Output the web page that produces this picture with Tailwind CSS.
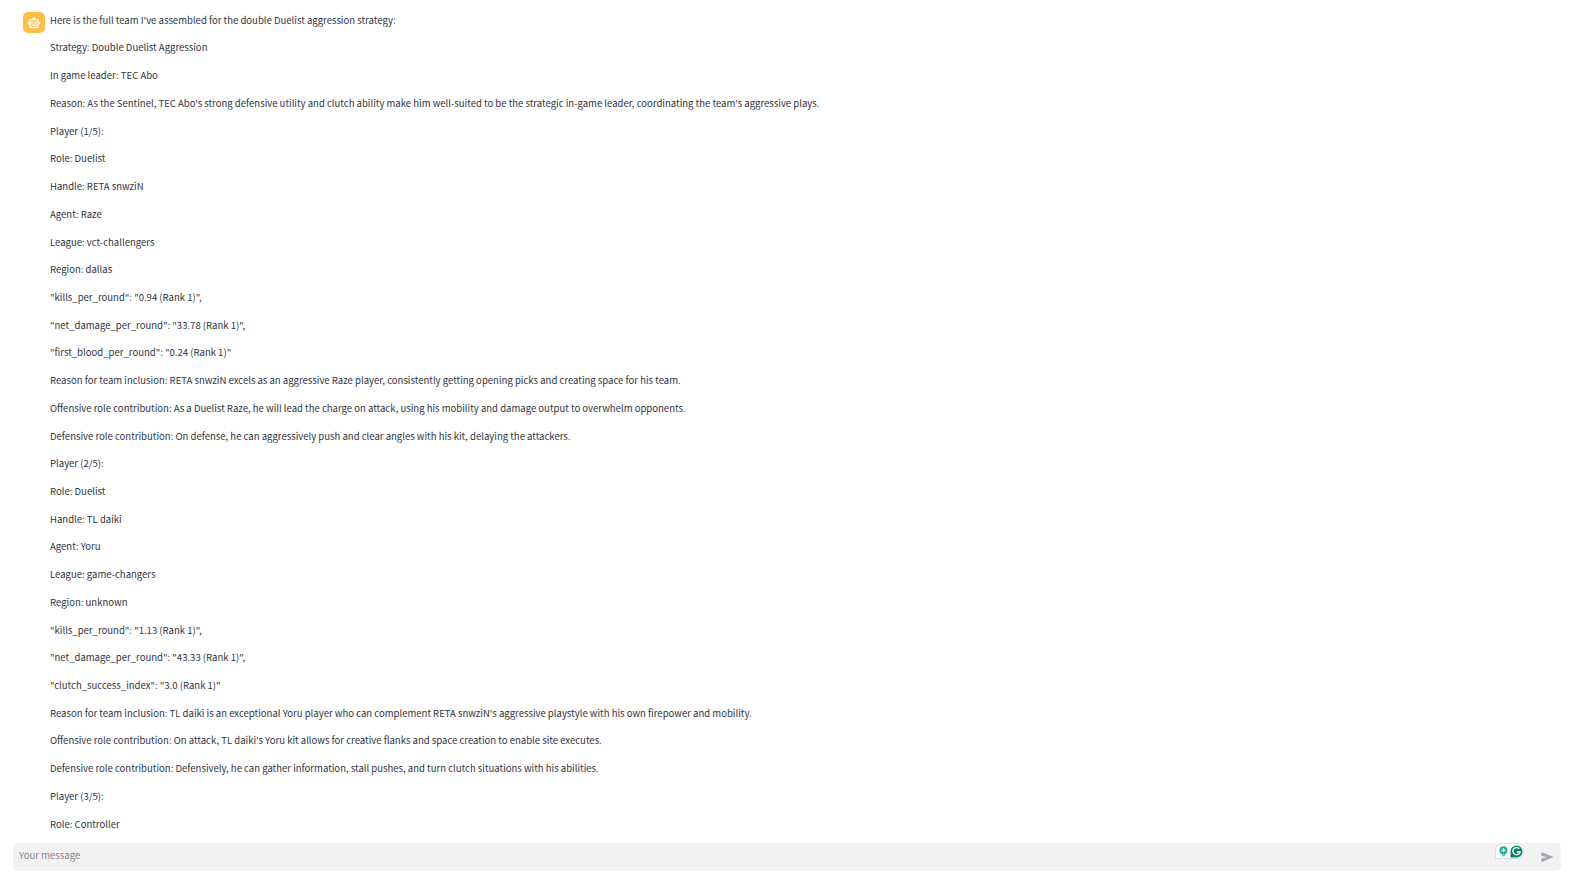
<!DOCTYPE html>
<html lang="en">
<head>
  <meta charset="UTF-8" />
  <meta name="viewport" content="width=device-width, initial-scale=1.0" />
  <title>Team Builder Chat</title>
  <script src="https://cdn.jsdelivr.net/npm/@tailwindcss/browser@4"></script>
</head>
<body class="bg-white h-screen overflow-hidden flex flex-col font-['Noto_Sans_CJK_SC',sans-serif] text-[9.558px] leading-[17.0667px] text-[#31333f]">

  <main class="flex-1 min-h-0 overflow-hidden flex items-start gap-[5px] pt-3 pl-[23px]">
    <!-- assistant avatar -->
    <div class="w-[22px] h-[21px] shrink-0 rounded-[5px] bg-[#ffbd45] flex items-center justify-center">
      <svg class="w-[14px] h-[14px]" viewBox="0 0 24 24" fill="white">
        <path d="M6 7h12v12H6z" fill-opacity=".3" />
        <path d="M20 9V7c0-1.1-.9-2-2-2h-3c0-1.66-1.34-3-3-3S9 3.34 9 5H6c-1.1 0-2 .9-2 2v2c-1.66 0-3 1.34-3 3s1.34 3 3 3v4c0 1.1.9 2 2 2h12c1.1 0 2-.9 2-2v-4c1.66 0 3-1.34 3-3s-1.34-3-3-3zm-2 10H6V7h12v12zm-9-6c-.83 0-1.5-.67-1.5-1.5S8.17 10 9 10s1.5.67 1.5 1.5S9.83 13 9 13zm7.5-1.5c0 .83-.67 1.5-1.5 1.5s-1.5-.67-1.5-1.5.67-1.5 1.5-1.5 1.5.67 1.5 1.5zM8 15h8v2H8v-2z" />
      </svg>
    </div>

    <div class="-mt-[0.234375px] flex flex-col gap-[10.6667px] whitespace-nowrap">
      <p>Here is the full team I've assembled for the double Duelist aggression strategy:</p>
      <p>Strategy: Double Duelist Aggression</p>
      <p>In game leader: TEC Abo</p>
      <p>Reason: As the Sentinel, TEC Abo's strong defensive utility and clutch ability make him well-suited to be the strategic in-game leader, coordinating the team's aggressive plays.</p>
      <p>Player (1/5):</p>
      <p>Role: Duelist</p>
      <p>Handle: RETA snwziN</p>
      <p>Agent: Raze</p>
      <p>League: vct-challengers</p>
      <p>Region: dallas</p>
      <p>"kills_per_round": "0.94 (Rank 1)",</p>
      <p>"net_damage_per_round": "33.78 (Rank 1)",</p>
      <p>"first_blood_per_round": "0.24 (Rank 1)"</p>
      <p>Reason for team inclusion: RETA snwziN excels as an aggressive Raze player, consistently getting opening picks and creating space for his team.</p>
      <p>Offensive role contribution: As a Duelist Raze, he will lead the charge on attack, using his mobility and damage output to overwhelm opponents.</p>
      <p>Defensive role contribution: On defense, he can aggressively push and clear angles with his kit, delaying the attackers.</p>
      <p>Player (2/5):</p>
      <p>Role: Duelist</p>
      <p>Handle: TL daiki</p>
      <p>Agent: Yoru</p>
      <p>League: game-changers</p>
      <p>Region: unknown</p>
      <p>"kills_per_round": "1.13 (Rank 1)",</p>
      <p>"net_damage_per_round": "43.33 (Rank 1)",</p>
      <p>"clutch_success_index": "3.0 (Rank 1)"</p>
      <p>Reason for team inclusion: TL daiki is an exceptional Yoru player who can complement RETA snwziN's aggressive playstyle with his own firepower and mobility.</p>
      <p>Offensive role contribution: On attack, TL daiki's Yoru kit allows for creative flanks and space creation to enable site executes.</p>
      <p>Defensive role contribution: Defensively, he can gather information, stall pushes, and turn clutch situations with his abilities.</p>
      <p>Player (3/5):</p>
      <p>Role: Controller</p>
    </div>
  </main>

  <!-- chat input -->
  <footer class="shrink-0 pl-[13px] pr-[26px] pb-[19px]">
    <div class="h-7 rounded-[5px] bg-[#f2f2f2] flex items-start pl-1.5 pr-[7.5px]">
      <span class="flex-1 pt-1 text-[9.6px] text-[#83858f]">Your message</span>
      <div class="mt-px mr-[17.5px] w-[27px] h-[14px] rounded-tl-[7px] rounded-r-[7px] bg-white shadow-[0_0_1px_1px_#dcdce6] flex items-center justify-between pl-[3px]">
        <svg class="w-[9px] h-[11px]" viewBox="0 0 9 11">
          <circle cx="4.5" cy="4.3" r="4" fill="#15b392" />
          <path d="M2.5 7h4v1.5h-4zM3 9.3h3v1H3z" fill="#15b392" />
          <path d="M4.5 2.3v4M2.5 4.3h4" stroke="white" stroke-width="1.3" />
        </svg>
        <svg class="w-[13px] h-[13px]" viewBox="0 0 13 13">
          <path d="M6.5.5a6 6 0 1 1 0 12H.5v-6a6 6 0 0 1 6-6z" fill="#07826f" />
          <path d="M9.3 3.9A3.6 3.6 0 1 0 10 7H7" fill="none" stroke="white" stroke-width="1.4" />
        </svg>
      </div>
      <svg class="mt-2 w-[13px] h-3" viewBox="0 0 13 12" fill="#a3a8b8">
        <path d="M.5 1 12.5 6 .5 11.2V7.3L6.5 6 .5 4.9z" />
      </svg>
    </div>
  </footer>

</body>
</html>
